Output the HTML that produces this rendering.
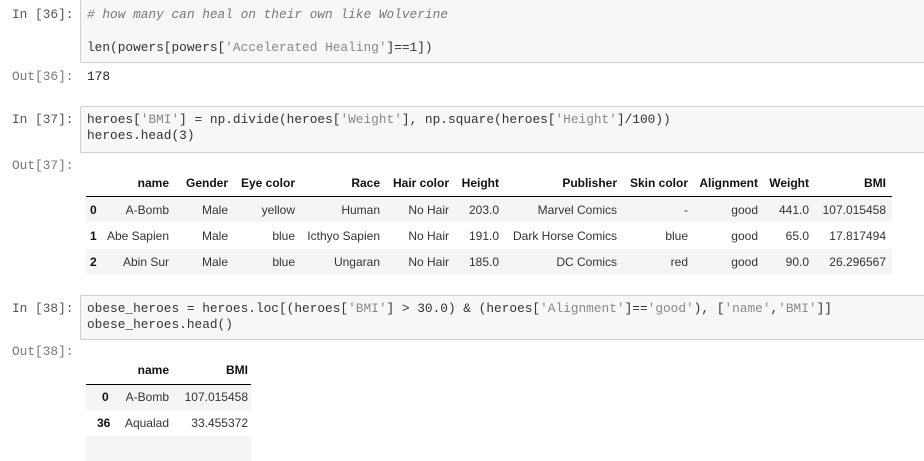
<!DOCTYPE html>
<html><head><meta charset="utf-8"><style>
body{margin:0;width:924px;height:445px;background:#fff;position:relative;overflow:hidden;font-family:"Liberation Sans",sans-serif}
.p{position:absolute;font-family:"Liberation Mono",monospace;font-size:12.8px;color:#555;white-space:pre}
.o{color:#777}
.box{position:absolute;left:80px;width:860px;background:#f7f7f7;border:1px solid #cfcfcf;border-radius:2px}
.c{position:absolute;font-family:"Liberation Mono",monospace;font-size:12.8px;color:#333;white-space:pre}
.s{color:#888}.cm{color:#777;font-style:italic}
.t{position:absolute;font-size:12px;color:#333;white-space:nowrap;text-align:right}
.h{font-weight:bold;color:#111}
.st{position:absolute;background:#f5f5f5}
.ln{position:absolute;height:1px;background:#000}
</style></head><body>
<div class="p" style="left:12px;top:7px">In [36]:</div>
<div class="box" style="top:-2px;height:63px"></div>
<div class="c cm" style="left:87px;top:7px"># how many can heal on their own like Wolverine</div>
<div class="c" style="left:87px;top:40px">len(powers[powers[<span class="s">'Accelerated Healing'</span>]==1])</div>
<div class="p o" style="left:12px;top:69px">Out[36]:</div>
<div class="c" style="left:87px;top:69px;color:#222">178</div>

<div class="p" style="left:12px;top:112px">In [37]:</div>
<div class="box" style="top:106px;height:45px"></div>
<div class="c" style="left:87px;top:112px">heroes[<span class="s">'BMI'</span>] = np.divide(heroes[<span class="s">'Weight'</span>], np.square(heroes[<span class="s">'Height'</span>]/100))</div>
<div class="c" style="left:87px;top:128px">heroes.head(3)</div>
<div class="p o" style="left:12px;top:158px">Out[37]:</div>

<div class="st" style="left:86px;top:197px;width:806px;height:25px"></div>
<div class="st" style="left:86px;top:249px;width:806px;height:25px"></div>
<div class="ln" style="left:86px;top:196px;width:806px"></div>

<div class="p" style="left:12px;top:301px">In [38]:</div>
<div class="box" style="top:295px;height:43px"></div>
<div class="c" style="left:87px;top:301px">obese_heroes = heroes.loc[(heroes[<span class="s">'BMI'</span>] &gt; 30.0) &amp; (heroes[<span class="s">'Alignment'</span>]==<span class="s">'good'</span>), [<span class="s">'name'</span>,<span class="s">'BMI'</span>]]</div>
<div class="c" style="left:87px;top:317px">obese_heroes.head()</div>
<div class="p o" style="left:12px;top:344px">Out[38]:</div>
<div class="st" style="left:86px;top:385px;width:165px;height:25px"></div>
<div class="st" style="left:86px;top:436px;width:165px;height:25px"></div>
<div class="ln" style="left:86px;top:384px;width:165px"></div>

<div class="t h" style="right:755px;top:176px">name</div>
<div class="t h" style="right:696px;top:176px">Gender</div>
<div class="t h" style="right:629px;top:176px">Eye color</div>
<div class="t h" style="right:544px;top:176px">Race</div>
<div class="t h" style="right:475px;top:176px">Hair color</div>
<div class="t h" style="right:425px;top:176px">Height</div>
<div class="t h" style="right:307px;top:176px">Publisher</div>
<div class="t h" style="right:236px;top:176px">Skin color</div>
<div class="t h" style="right:166px;top:176px">Alignment</div>
<div class="t h" style="right:115px;top:176px">Weight</div>
<div class="t h" style="right:38px;top:176px">BMI</div>

<div class="t h" style="left:90px;top:203px">0</div>
<div class="t" style="right:755px;top:203px">A-Bomb</div>
<div class="t" style="right:696px;top:203px">Male</div>
<div class="t" style="right:629px;top:203px">yellow</div>
<div class="t" style="right:544px;top:203px">Human</div>
<div class="t" style="right:475px;top:203px">No Hair</div>
<div class="t" style="right:425px;top:203px">203.0</div>
<div class="t" style="right:307px;top:203px">Marvel Comics</div>
<div class="t" style="right:236px;top:203px">-</div>
<div class="t" style="right:166px;top:203px">good</div>
<div class="t" style="right:115px;top:203px">441.0</div>
<div class="t" style="right:38px;top:203px">107.015458</div>

<div class="t h" style="left:90px;top:229px">1</div>
<div class="t" style="right:755px;top:229px">Abe Sapien</div>
<div class="t" style="right:696px;top:229px">Male</div>
<div class="t" style="right:629px;top:229px">blue</div>
<div class="t" style="right:544px;top:229px">Icthyo Sapien</div>
<div class="t" style="right:475px;top:229px">No Hair</div>
<div class="t" style="right:425px;top:229px">191.0</div>
<div class="t" style="right:307px;top:229px">Dark Horse Comics</div>
<div class="t" style="right:236px;top:229px">blue</div>
<div class="t" style="right:166px;top:229px">good</div>
<div class="t" style="right:115px;top:229px">65.0</div>
<div class="t" style="right:38px;top:229px">17.817494</div>

<div class="t h" style="left:90px;top:255px">2</div>
<div class="t" style="right:755px;top:255px">Abin Sur</div>
<div class="t" style="right:696px;top:255px">Male</div>
<div class="t" style="right:629px;top:255px">blue</div>
<div class="t" style="right:544px;top:255px">Ungaran</div>
<div class="t" style="right:475px;top:255px">No Hair</div>
<div class="t" style="right:425px;top:255px">185.0</div>
<div class="t" style="right:307px;top:255px">DC Comics</div>
<div class="t" style="right:236px;top:255px">red</div>
<div class="t" style="right:166px;top:255px">good</div>
<div class="t" style="right:115px;top:255px">90.0</div>
<div class="t" style="right:38px;top:255px">26.296567</div>

<div class="t h" style="right:755px;top:363px">name</div>
<div class="t h" style="right:676px;top:363px">BMI</div>
<div class="t h" style="left:102px;top:390px">0</div>
<div class="t" style="right:755px;top:390px">A-Bomb</div>
<div class="t" style="right:676px;top:390px">107.015458</div>
<div class="t h" style="left:97px;top:416px">36</div>
<div class="t" style="right:755px;top:416px">Aqualad</div>
<div class="t" style="right:676px;top:416px">33.455372</div>
</body></html>
